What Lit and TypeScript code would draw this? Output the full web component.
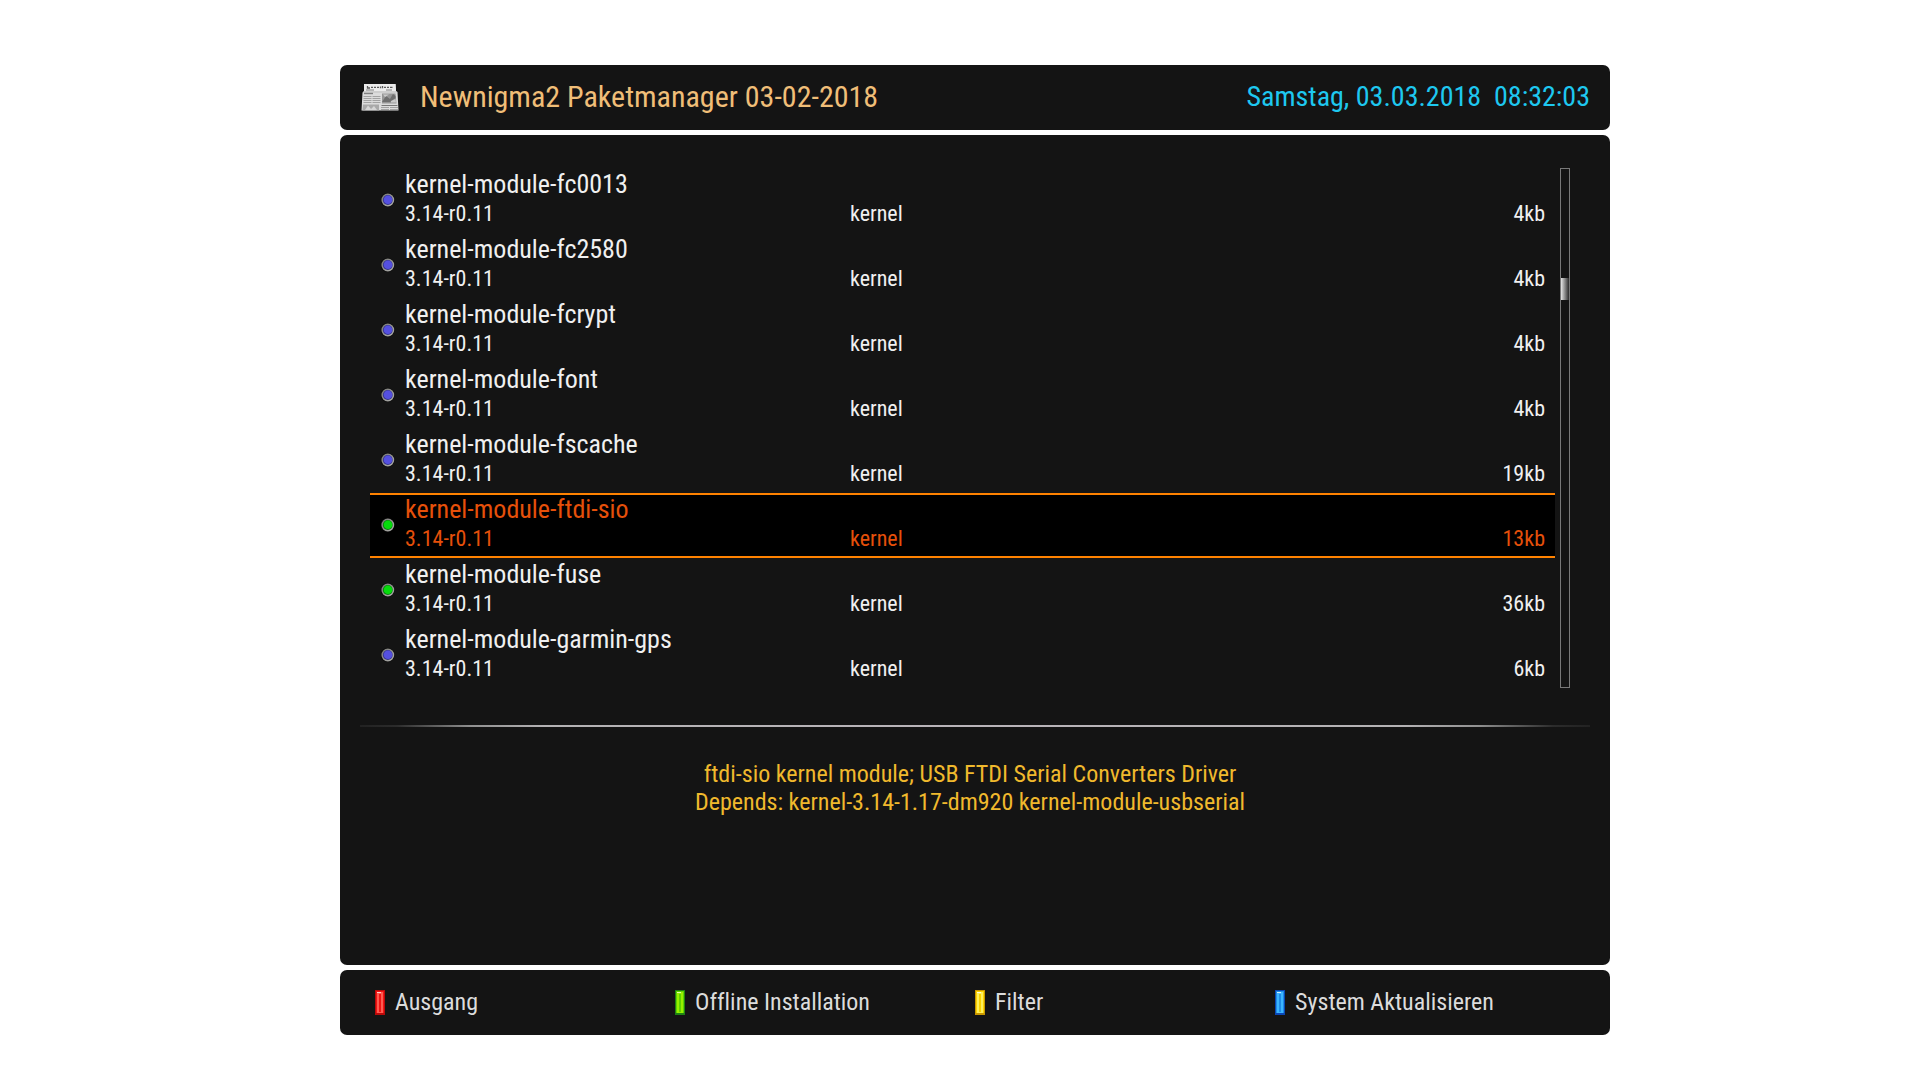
import { LitElement, html, css, svg } from "lit";
import { customElement, property, state } from "lit/decorators.js";
import { classMap } from "lit/directives/class-map.js";

interface Pkg {
  name: string;
  version: string;
  section: string;
  size: string;
  installed: boolean;
}

const pkg = (name: string, size: string, installed = false): Pkg => ({
  name,
  version: "3.14-r0.11",
  section: "kernel",
  size,
  installed,
});

const PACKAGES: Pkg[] = [
  pkg("kernel-module-fc0013", "4kb"),
  pkg("kernel-module-fc2580", "4kb"),
  pkg("kernel-module-fcrypt", "4kb"),
  pkg("kernel-module-font", "4kb"),
  pkg("kernel-module-fscache", "19kb"),
  pkg("kernel-module-ftdi-sio", "13kb", true),
  pkg("kernel-module-fuse", "36kb", true),
  pkg("kernel-module-garmin-gps", "6kb"),
];

const KEYS = [
  { label: "Ausgang", edge: "#b90a0a", light: "#ff5a50", core: "#f01414", glint: "#ffd2cc" },
  { label: "Offline Installation", edge: "#1e8214", light: "#96f000", core: "#5fd200", glint: "#e6ffb4" },
  { label: "Filter", edge: "#c89600", light: "#fff05a", core: "#fad200", glint: "#ffffe0" },
  { label: "System Aktualisieren", edge: "#0a46b4", light: "#3cb4ff", core: "#1e8ce6", glint: "#d2f0ff" },
];

@customElement("status-lamp")
export class StatusLamp extends LitElement {
  @property({ type: Boolean }) on = false;

  static styles = css`
    :host {
      display: block;
    }
    .lamp {
      display: block;
      width: 14px;
      height: 14px;
    }
  `;

  render() {
    return html`<svg class="lamp" viewBox="0 0 14 14" aria-hidden="true">
      <defs>
        <linearGradient id="rim" x1="0" y1="0" x2="1" y2="1">
          <stop offset="0" stop-color="#747472" />
          <stop offset="1" stop-color="#b4b4b0" />
        </linearGradient>
      </defs>
      <circle cx="6.5" cy="7" r="7" fill="#080808" />
      <circle cx="6.8" cy="7" r="6.4" fill="url(#rim)" />
      <circle cx="6.8" cy="7" r="4.9" fill=${this.on ? "#0a7a10" : "#34348c"} />
      <circle cx="7" cy="6.8" r="4.3" fill=${this.on ? "#06dc0c" : "#5550e0"} />
    </svg>`;
  }
}

@customElement("app-root")
export class AppRoot extends LitElement {
  @state() private selected = 5;

  static styles = css`
    :host {
      display: block;
      min-height: 100vh;
      box-sizing: border-box;
      padding-block: 65px;
      padding-inline: calc((100% - 1270px) / 2 + 15px) calc((100% - 1270px) / 2 - 15px);
      background: #fff;
      font-family: "Roboto Condensed", Roboto, sans-serif;
      font-variant-ligatures: none;
      color: #f0f0f0;
    }
    .screen {
      display: flex;
      flex-direction: column;
      gap: 5px;
    }
    .panel {
      background: #141414;
      border-radius: 7px;
    }
    .top {
      display: flex;
      align-items: center;
      height: 65px;
      padding: 0 20px 0 21px;
      box-sizing: border-box;
    }
    .paper {
      width: 38px;
      height: 27px;
      margin-right: 21px;
    }
    .title {
      margin: 0;
      flex: 1;
      font-size: 30px;
      line-height: 36px;
      padding-bottom: 2px;
      font-weight: 400;
      color: #f0be78;
    }
    .clock {
      font-size: 28px;
      line-height: 36px;
      padding-bottom: 2px;
      color: #1ec8f0;
      white-space: pre;
    }
    .main {
      padding: 33px 20px 0;
      min-height: 830px;
      box-sizing: border-box;
    }
    .browser {
      display: flex;
      gap: 5px;
      padding: 0 20px 0 10px;
    }
    .list {
      flex: 1;
      border-collapse: collapse;
      width: 100%;
    }
    .list,
    .list tbody {
      display: block;
    }
    .row {
      display: grid;
      grid-template-columns: 35px 445px 1fr auto;
      grid-template-rows: 30px 25px;
      height: 65px;
      box-sizing: border-box;
      padding: 0 10px 6px 0;
      border-block: 2px solid transparent;
      cursor: pointer;
    }
    .row.selected {
      background: #000;
      border-color: #ff8200;
      color: #e6500a;
    }
    .cell {
      padding: 0;
      font-size: 22px;
      line-height: 28px;
      white-space: nowrap;
    }
    .lampcell {
      grid-row: 1 / 3;
      padding: 23px 0 0 11px;
    }
    .name {
      grid-column: 2 / 5;
      font-size: 26px;
      text-align: left;
      font-weight: 400;
    }
    .version {
      grid-column: 2;
    }
    .track {
      width: 10px;
      box-sizing: border-box;
      border: 1px solid #787878;
      padding-top: 109px;
    }
    .thumb {
      height: 22px;
      background: linear-gradient(90deg, #e6e6e6, #2a2a2a);
    }
    .rule {
      height: 2px;
      border: 0;
      margin: 37px 0 33px;
      background: linear-gradient(
        90deg,
        #222,
        #2c2c2c 3%,
        #909090 9%,
        #b4b2b4 15%,
        #b9b4b9 50%,
        #b4b2b4 85%,
        #909090 91%,
        #2c2c2c 97%,
        #222
      );
    }
    .about {
      margin: 0;
      padding-right: 10px;
      text-align: center;
      font-size: 24px;
      line-height: 28px;
      color: #f0b92d;
    }
    .keys {
      display: grid;
      grid-template-columns: repeat(4, 300px);
      height: 65px;
      padding-left: 35px;
      box-sizing: border-box;
    }
    .key {
      display: flex;
      align-items: center;
      gap: 10px;
      padding: 0;
      border: 0;
      background: none;
      font: inherit;
      font-variant-ligatures: none;
      font-size: 24px;
      line-height: 28px;
      color: #dcdcdc;
      cursor: pointer;
    }
    .label {
      padding-bottom: 2px;
    }
    .swatch {
      width: 10px;
      height: 25px;
    }
  `;

  private paper() {
    const bars = (x: number, w: number, ys: number[]) =>
      ys.map((y) => svg`<rect x=${x} y=${y} width=${w} height="1" fill="#a2a2a2" />`);
    return html`<svg class="paper" viewBox="0 0 38 27" aria-hidden="true">
      <path d="M3 0H34.5L35 7L36.5 8L37.5 26.5H.5L1.5 8.500L3 7Z" fill="#dcdcdc" />
      <path d="M3 0H34.5L35 7H3Z" fill="#ececec" />
      <path d="M6.500 2V4H9M10 3.300H12M13 3.300H15M16 3.300H18M19.500 2.500V4.300M21.500 2V4.300M23 3.300H25M26 3.300H28M29 3.300H31.500" stroke="#5a5a5a" stroke-width="1.3" fill="none" />
      <path d="M5 6H13M25 6H31" stroke="#808080" stroke-width="1" />
      <path d="M2.5 8H35.5" stroke="#c0c0c0" stroke-width="1" />
      <path d="M3 9.500H12" stroke="#808080" stroke-width="1.4" />
      ${bars(2.5, 8, [12, 14, 16, 18])} ${bars(11.5, 8, [12, 14, 16, 18])}
      <path d="M21 9.500H34.5L35.5 19.500H21Z" fill="#969696" />
      <path d="M21 18L25 12L29 15L32 10L34.5 12V14L29 18Z" fill="#6e6e6e" />
      <path d="M22 10.500H28L24 13ZM30 17L34.5 15L35 18.500H30Z" fill="#cacaca" />
      <path d="M2 20.500H18V26.500H1.5Z" fill="#a9a9a9" />
      <path d="M4 26L7 21.500L10 25L13 22L16 26Z" fill="#d6d6d6" />
      <path d="M20.5 21.500H36.5" stroke="#777" stroke-width="1" />
      ${bars(20, 8, [23, 25])} ${bars(29, 8, [23, 25])}
    </svg>`;
  }

  render() {
    return html`<div class="screen">
      <header class="panel top">
        ${this.paper()}
        <h1 class="title">Newnigma2 Paketmanager 03-02-2018</h1>
        <time class="clock">Samstag, 03.03.2018  08:32:03</time>
      </header>
      <main class="panel main">
        <div class="browser">
          <table class="list">
            <tbody>
              ${PACKAGES.map(
                (p, i) => html`<tr
                  class=${classMap({ row: true, selected: i === this.selected })}
                  @click=${() => (this.selected = i)}
                >
                  <td class="cell lampcell"><status-lamp ?on=${p.installed}></status-lamp></td>
                  <th class="cell name" scope="row">${p.name}</th>
                  <td class="cell version">${p.version}</td>
                  <td class="cell">${p.section}</td>
                  <td class="cell">${p.size}</td>
                </tr>`,
              )}
            </tbody>
          </table>
          <div class="track"><div class="thumb"></div></div>
        </div>
        <hr class="rule" />
        <p class="about">
          ftdi-sio kernel module; USB FTDI Serial Converters Driver<br />Depends: kernel-3.14-1.17-dm920 kernel-module-usbserial
        </p>
      </main>
      <footer class="panel keys">
        ${KEYS.map(
          (k) => html`<button class="key" type="button">
            <svg class="swatch" viewBox="0 0 10 25" aria-hidden="true">
              <rect width="10" height="25" fill=${k.edge} />
              <rect x="1" y="1" width="8" height="22" fill=${k.core} />
              <rect x="2" y="2" width="6" height="21" fill=${k.light} />
              <rect x="4" y="4" width="2" height="18" fill=${k.core} />
              <rect x="2" y="2" width="4" height="1" fill=${k.glint} />
            </svg>
            <span class="label">${k.label}</span>
          </button>`,
        )}
      </footer>
    </div>`;
  }
}
